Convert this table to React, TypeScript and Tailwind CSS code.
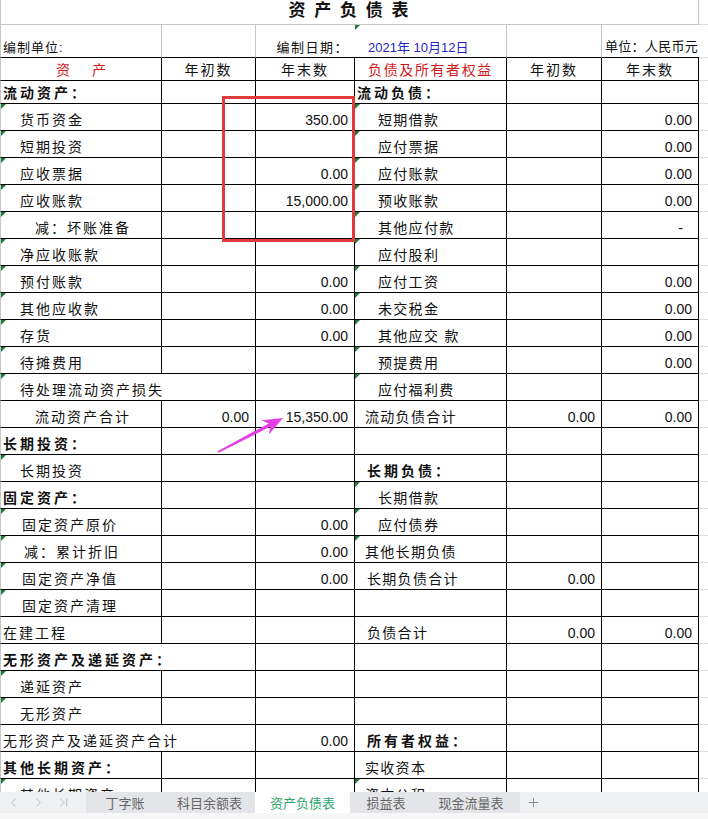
import { ChevronLast, ChevronLeft, ChevronRight, Plus } from "lucide-react";

type Side = {
  t?: string;
  pl?: string;
  bold?: boolean;
  tri?: boolean;
  span?: boolean;
};

type Row = {
  l: Side;
  r: Side;
  a?: string;
  b?: string;
  c?: string;
  d?: string;
  dash?: boolean;
  short?: boolean;
};

const rows: Row[] = [
  { short: true, l: { t: "流动资产：", bold: true }, r: { t: "流动负债：", bold: true } },
  { l: { t: "货币资金", pl: "pl-[19px]", tri: true }, b: "350.00", r: { t: "短期借款", pl: "pl-[23px]", tri: true }, d: "0.00" },
  { l: { t: "短期投资", pl: "pl-[19px]", tri: true }, r: { t: "应付票据", pl: "pl-[23px]", tri: true }, d: "0.00" },
  { l: { t: "应收票据", pl: "pl-[19px]", tri: true }, b: "0.00", r: { t: "应付账款", pl: "pl-[23px]", tri: true }, d: "0.00" },
  { l: { t: "应收账款", pl: "pl-[19px]", tri: true }, b: "15,000.00", r: { t: "预收账款", pl: "pl-[23px]", tri: true }, d: "0.00" },
  { l: { t: "减：坏账准备", pl: "pl-[34px]", tri: true }, r: { t: "其他应付款", pl: "pl-[23px]", tri: true }, d: "-", dash: true },
  { l: { t: "净应收账款", pl: "pl-[19px]", tri: true }, r: { t: "应付股利", pl: "pl-[23px]", tri: true } },
  { l: { t: "预付账款", pl: "pl-[19px]", tri: true }, b: "0.00", r: { t: "应付工资", pl: "pl-[23px]", tri: true }, d: "0.00" },
  { l: { t: "其他应收款", pl: "pl-[19px]", tri: true }, b: "0.00", r: { t: "未交税金", pl: "pl-[23px]", tri: true }, d: "0.00" },
  { l: { t: "存货", pl: "pl-[19px]", tri: true }, b: "0.00", r: { t: "其他应交 款", pl: "pl-[23px]", tri: true }, d: "0.00" },
  { l: { t: "待摊费用", pl: "pl-[19px]", tri: true }, r: { t: "预提费用", pl: "pl-[23px]", tri: true }, d: "0.00" },
  { l: { t: "待处理流动资产损失", pl: "pl-[19px]", tri: true, span: true }, r: { t: "应付福利费", pl: "pl-[23px]", tri: true } },
  { l: { t: "流动资产合计", pl: "pl-[34px]" }, a: "0.00", b: "15,350.00", r: { t: "流动负债合计", pl: "pl-[10px]" }, c: "0.00", d: "0.00" },
  { l: { t: "长期投资：", bold: true }, r: {} },
  { l: { t: "长期投资", pl: "pl-[19px]", tri: true }, r: { t: "长期负债：", bold: true, pl: "pl-[12px]" } },
  { l: { t: "固定资产：", bold: true }, r: { t: "长期借款", pl: "pl-[23px]", tri: true } },
  { l: { t: "固定资产原价", pl: "pl-[21px]", tri: true }, b: "0.00", r: { t: "应付债券", pl: "pl-[23px]", tri: true } },
  { l: { t: "减：累计折旧", pl: "pl-[23px]", tri: true }, b: "0.00", r: { t: "其他长期负债", pl: "pl-[10px]", tri: true } },
  { l: { t: "固定资产净值", pl: "pl-[21px]", tri: true }, b: "0.00", r: { t: "长期负债合计", pl: "pl-[12px]" }, c: "0.00" },
  { l: { t: "固定资产清理", pl: "pl-[21px]", tri: true }, r: {} },
  { l: { t: "在建工程", pl: "pl-[2px]" }, r: { t: "负债合计", pl: "pl-[12px]" }, c: "0.00", d: "0.00" },
  { l: { t: "无形资产及递延资产：", bold: true, span: true }, r: {} },
  { l: { t: "递延资产", pl: "pl-[19px]", tri: true }, r: {} },
  { l: { t: "无形资产", pl: "pl-[19px]", tri: true }, r: {} },
  { l: { t: "无形资产及递延资产合计", pl: "pl-[2px]", span: true }, b: "0.00", r: { t: "所有者权益：", bold: true, pl: "pl-[12px]" } },
  { l: { t: "其他长期资产：", bold: true }, r: { t: "实收资本", pl: "pl-[10px]" } },
  { l: { t: "其他长期资产", pl: "pl-[19px]", tri: true }, r: { t: "资本公积", pl: "pl-[10px]", tri: true } },
];

function Tri() {
  return (
    <span className="absolute left-0 top-0 h-0 w-0 border-r-[5px] border-t-[5px] border-r-transparent border-t-[#1f7a3a]" />
  );
}

function LabelText({ side, right }: { side: Side; right?: boolean }) {
  if (!side.t) return null;
  const pad = side.pl ?? "pl-[2px]";
  const weight = side.bold ? "font-bold tracking-[3px]" : right ? "tracking-[1.3px]" : "tracking-[2px]";
  return <span className={`${pad} ${weight} whitespace-nowrap leading-[20px]`}>{side.t}</span>;
}

function Num({ v, dash }: { v?: string; dash?: boolean }) {
  return v ? <span className={`${dash ? "pr-[15px]" : "pr-[6px]"} leading-[20px]`}>{v}</span> : null;
}

function TableRow({ row }: { row: Row }) {
  const h = row.short ? "h-[23px]" : "h-[27px]";
  return (
    <div className={`flex ${h}`}>
      <div
        className={`relative flex w-[162px] shrink-0 items-end border-b border-l border-b-black border-l-[#c6c6c6] ${
          row.l.span ? "" : "border-r border-r-black"
        }`}
      >
        {row.l.tri ? <Tri /> : null}
        <LabelText side={row.l} />
      </div>
      <div className="flex w-[94px] shrink-0 items-end justify-end border-b border-r border-black">
        <Num v={row.a} />
      </div>
      <div className="flex w-[99px] shrink-0 items-end justify-end border-b border-r border-black">
        <Num v={row.b} />
      </div>
      <div className="relative flex w-[152px] shrink-0 items-end border-b border-r border-black">
        {row.r.tri ? <Tri /> : null}
        <LabelText side={row.r} right />
      </div>
      <div className="flex w-[95px] shrink-0 items-end justify-end border-b border-r border-black">
        <Num v={row.c} />
      </div>
      <div className="flex w-[97px] shrink-0 items-end justify-end border-b border-r border-black">
        <Num v={row.d} dash={row.dash} />
      </div>
      <div className="flex-1 border-b border-[#dcdcdc]" />
    </div>
  );
}

export default function App() {
  return (
    <div className="flex h-[819px] w-[708px] flex-col overflow-hidden bg-white font-['Liberation_Sans','Noto_Sans_CJK_SC',sans-serif] text-[14px] text-[#111]">
      <div className="relative flex-1 overflow-hidden">
        {/* title */}
        <div className="flex h-[25px]">
          <div className="flex w-[699px] shrink-0 items-center justify-center border-b border-l border-r border-[#c6c6c6] pb-[2px] text-[17px] font-bold tracking-[2px]">
            资 产 负 债 表
          </div>
          <div className="flex-1 border-b border-[#dcdcdc]" />
        </div>

        {/* info row */}
        <div className="flex h-[33px] text-[13px]">
          <div className="flex w-[162px] shrink-0 items-end border-b border-l border-r border-b-black border-l-[#c6c6c6] border-r-[#c6c6c6] pl-[2px] leading-[18px] tracking-[1px]">
            编制单位:
          </div>
          <div className="w-[94px] shrink-0 border-b border-r border-b-black border-r-[#c6c6c6]" />
          <div className="flex w-[99px] shrink-0 items-end justify-end border-b border-b-black pr-[6px] leading-[18px] tracking-[1.5px]">
            编制日期：
          </div>
          <div className="relative flex w-[152px] shrink-0 items-end border-b border-r border-b-black border-r-[#c6c6c6] pl-[13px] leading-[18px] text-[#2424c4]">
            <Tri />
            2021年 10月12日
          </div>
          <div className="w-[95px] shrink-0 border-b border-r border-b-black border-r-[#c6c6c6]" />
          <div className="flex w-[97px] shrink-0 items-end whitespace-nowrap border-b border-b-black pb-[1px] pl-[3px] leading-[18px] tracking-[0.3px]">
            单位：人民币元
          </div>
          <div className="flex-1 border-b border-[#dcdcdc]" />
        </div>

        {/* header row */}
        <div className="flex h-[23px]">
          <div className="flex w-[162px] shrink-0 items-end justify-center gap-[22px] border-b border-l border-r border-b-black border-l-[#c6c6c6] border-r-black leading-[20px] text-[#d01818]">
            <span>资</span>
            <span>产</span>
          </div>
          <div className="flex w-[94px] shrink-0 items-end justify-center border-b border-r border-black leading-[20px] tracking-[2px]">
            年初数
          </div>
          <div className="flex w-[99px] shrink-0 items-end justify-center border-b border-r border-black leading-[20px] tracking-[2px]">
            年末数
          </div>
          <div className="flex w-[152px] shrink-0 items-end justify-center border-b border-r border-black leading-[20px] tracking-[1.6px] text-[#d01818]">
            负债及所有者权益
          </div>
          <div className="flex w-[95px] shrink-0 items-end justify-center border-b border-r border-black leading-[20px] tracking-[2px]">
            年初数
          </div>
          <div className="flex w-[97px] shrink-0 items-end justify-center border-b border-r border-black leading-[20px] tracking-[2px]">
            年末数
          </div>
          <div className="flex-1 border-b border-[#dcdcdc]" />
        </div>

        {rows.map((row, i) => (
          <TableRow key={i} row={row} />
        ))}

        {/* annotations */}
        <div className="pointer-events-none absolute left-[222px] top-[96px] h-[146px] w-[133px] border-[3px] border-[#e03c3c]" />
        <svg className="pointer-events-none absolute left-[210px] top-[410px]" width="80" height="50" viewBox="0 0 80 50">
          <polygon
            points="7.6,41.2 58.8,13.4 51.5,10.2 73,8 58.9,24.4 60.4,16.6 8.6,42.8"
            fill="#e63ee6"
          />
        </svg>
      </div>

      {/* sheet tabs */}
      <div className="flex h-[21px] shrink-0 items-center bg-[#eff0f2] text-[13px] text-[#666] font-['Noto_Sans_CJK_SC',sans-serif]">
        <div className="flex w-[86px] shrink-0 items-center gap-[10px] pl-[6px] text-[#b4b4b4]">
          <ChevronLeft size={15} strokeWidth={1.3} />
          <ChevronRight size={15} strokeWidth={1.3} />
          <ChevronLast size={15} strokeWidth={1.3} />
        </div>
        <div className="flex h-full w-[78px] items-center justify-center bg-[#e4e5e8]">丁字账</div>
        <div className="flex h-full w-[91px] items-center justify-center bg-[#e4e5e8]">科目余额表</div>
        <div className="flex h-full w-[95px] items-center justify-center bg-white text-[#2aa56c]">资产负债表</div>
        <div className="flex h-full w-[72px] items-center justify-center bg-[#e4e5e8]">损益表</div>
        <div className="flex h-full w-[98px] items-center justify-center bg-[#e4e5e8]">现金流量表</div>
        <div className="flex h-full items-center pl-[6px] text-[#777]">
          <Plus size={15} strokeWidth={1.3} />
        </div>
      </div>
      <div className="h-[6px] shrink-0 bg-[#f7f7f7]" />
    </div>
  );
}
